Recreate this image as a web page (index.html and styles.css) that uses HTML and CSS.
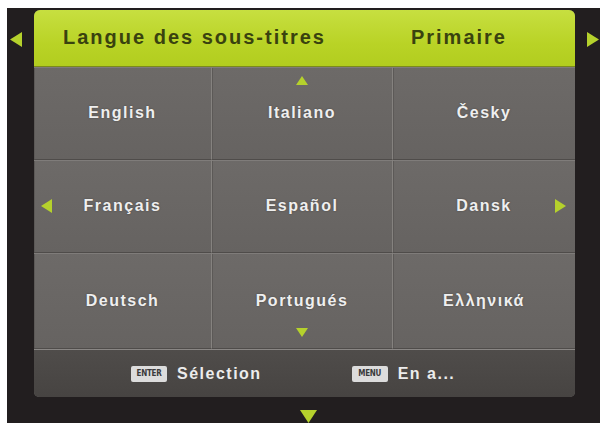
FILE: index.html
```html
<!DOCTYPE html>
<html lang="fr">
<head>
    <meta charset="UTF-8">
    <meta name="viewport" content="width=device-width, initial-scale=1.0">
    <title>Langue des sous-titres</title>
    <link rel="stylesheet" href="styles.css">
</head>
<body>
    <div class="screen">
        <div class="side side-left">
            <svg class="tri" width="12" height="15" viewBox="0 0 12 15"><polygon points="12,0 12,15 0,7.5"/></svg>
        </div>

        <div class="panel">
            <div class="header">
                <span class="header-title">Langue des sous-titres</span>
                <span class="header-value">Primaire</span>
            </div>

            <div class="grid">
                <div class="cell"><span class="label">English</span></div>
                <div class="cell">
                    <svg class="tri arrow-up" width="12" height="9" viewBox="0 0 12 9"><polygon points="6,0 12,9 0,9"/></svg>
                    <span class="label">Italiano</span>
                </div>
                <div class="cell"><span class="label">Česky</span></div>

                <div class="cell">
                    <svg class="tri arrow-left" width="11" height="14" viewBox="0 0 11 14"><polygon points="11,0 11,14 0,7"/></svg>
                    <span class="label">Français</span>
                </div>
                <div class="cell"><span class="label">Español</span></div>
                <div class="cell">
                    <span class="label">Dansk</span>
                    <svg class="tri arrow-right" width="11" height="14" viewBox="0 0 11 14"><polygon points="0,0 11,7 0,14"/></svg>
                </div>

                <div class="cell"><span class="label">Deutsch</span></div>
                <div class="cell">
                    <span class="label">Portugués</span>
                    <svg class="tri arrow-down" width="12" height="9" viewBox="0 0 12 9"><polygon points="0,0 12,0 6,9"/></svg>
                </div>
                <div class="cell"><span class="label">Ελληνικά</span></div>
            </div>

            <div class="footer">
                <span class="key">ENTER</span>
                <span class="hint">Sélection</span>
                <span class="key key-menu">MENU</span>
                <span class="hint">En a...</span>
            </div>
        </div>

        <div class="side side-right">
            <svg class="tri" width="12" height="15" viewBox="0 0 12 15"><polygon points="0,0 12,7.5 0,15"/></svg>
        </div>

        <div class="bottom">
            <svg class="tri" width="17" height="13" viewBox="0 0 17 13"><polygon points="0,0 17,0 8.5,13"/></svg>
        </div>
    </div>
</body>
</html>
```

FILE: styles.css
```css
body {
    margin: 0;
    background: #fff;
    font-family: "Liberation Sans", Arial, sans-serif;
    font-weight: bold;
}

.screen {
    margin: 8px 0 0 7px;
    width: 593px;
    height: 415px;
    box-sizing: border-box;
    padding-top: 2px;
    background: #221e1f;
    display: grid;
    grid-template-columns: 27px 541px 25px;
    grid-template-rows: 387px 26px;
}

.tri polygon {
    fill: #b5d12c;
}

.side {
    padding-top: 22px;
}
.side-left {
    padding-left: 3px;
}
.side-right {
    padding-left: 12px;
}

.bottom {
    grid-column: 2;
    display: flex;
    justify-content: center;
    padding: 13px 0 0 8px;
}

/* main menu panel */
.panel {
    display: flex;
    flex-direction: column;
    border-radius: 6px 6px 5px 5px;
    overflow: hidden;
    background: #686563;
}

.header {
    height: 55px;
    display: flex;
    align-items: center;
    padding: 0 68px 1px 29px;
    background: linear-gradient(#c7df40, #b9d326 60%, #b2cd1f);
    border-bottom: 1px solid #7b8a1c;
    color: #39420f;
    font-size: 20px;
    letter-spacing: 2px;
}
.header-value {
    margin-left: auto;
}

.grid {
    display: grid;
    grid-template-columns: 178px 181px 182px;
    grid-template-rows: 93px 93px 96px;
}

.cell {
    display: grid;
    grid-template-columns: 1fr auto 1fr;
    grid-template-rows: 1fr auto 1fr;
    background: linear-gradient(#6d6a68, #666361);
    border-right: 1px solid #85827f;
    border-bottom: 1px solid #4f4c4a;
    box-shadow: inset 0 1px 0 #7f7c7a, inset 1px 0 0 #5c5957;
    color: #efefef;
    font-size: 16px;
    letter-spacing: 1.5px;
    text-shadow: 0 0 2px rgba(0, 0, 0, 0.35);
}
.cell:nth-child(3n) {
    border-right: none;
}
.label {
    grid-row: 2;
    grid-column: 2;
}

.arrow-up {
    grid-row: 1;
    grid-column: 2;
    justify-self: center;
    margin-top: 9px;
}
.arrow-down {
    grid-row: 3;
    grid-column: 2;
    justify-self: center;
    align-self: end;
    margin-bottom: 11px;
}
.arrow-left {
    grid-row: 2;
    grid-column: 1;
    align-self: center;
    margin-left: 7px;
}
.arrow-right {
    grid-row: 2;
    grid-column: 3;
    justify-self: end;
    align-self: center;
    margin-right: 9px;
}

.footer {
    flex: 1;
    display: flex;
    align-items: center;
    padding-left: 97px;
    background: linear-gradient(#4f4c4a, #474442);
    border-top: 1px solid #8a8785;
    color: #ececec;
    font-size: 16px;
    letter-spacing: 1.5px;
}

.key {
    width: 36px;
    height: 16px;
    display: flex;
    align-items: center;
    justify-content: center;
    background: #dcdcdc;
    border-radius: 2px;
    color: #3a3a3a;
    font-family: "DejaVu Sans Condensed", "Liberation Sans Narrow", sans-serif;
    font-size: 8px;
    letter-spacing: -0.3px;
    margin-right: 10px;
}
.key-menu {
    margin-left: 90px;
}
```
